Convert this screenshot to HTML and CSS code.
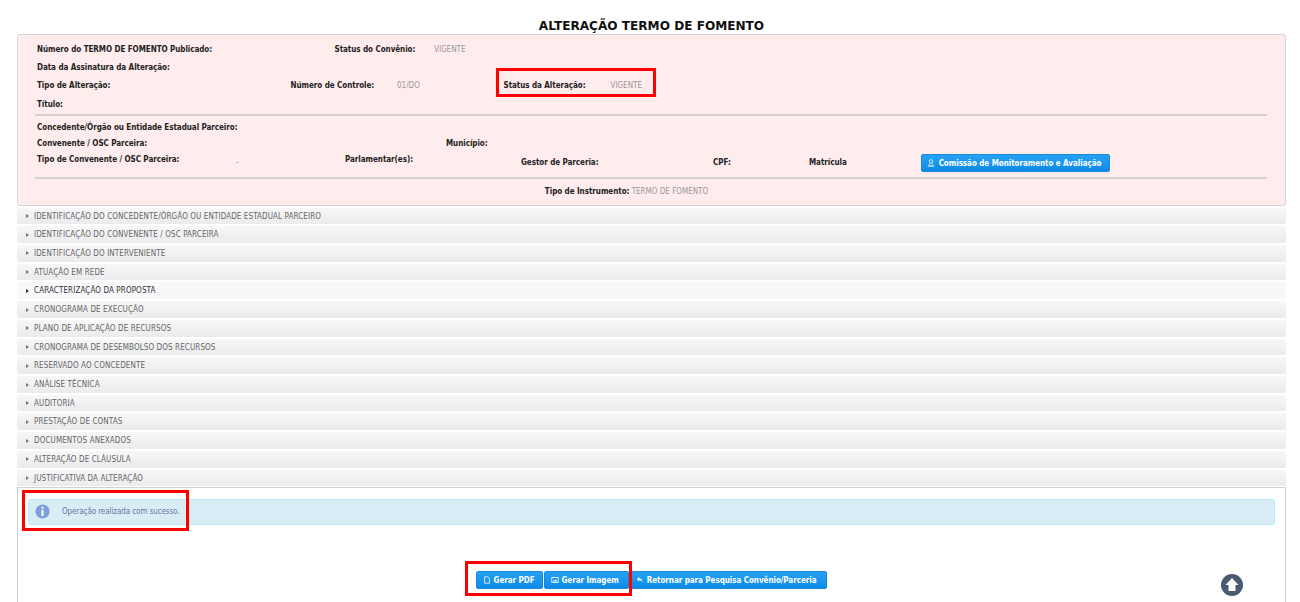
FILE: index.html
```html
<!DOCTYPE html>
<html lang="pt-BR">
<head>
    <meta charset="utf-8"/>
    <title>Alteração Termo de Fomento</title>
    <link rel="stylesheet" href="styles.css">
</head>
<body>
<h1 class="page-title">ALTERAÇÃO TERMO DE FOMENTO</h1>

<div class="summary">
    <div class="row">
        <span class="w-297"><b>Número do TERMO DE FOMENTO Publicado:</b></span>
        <span class="w-100"><b>Status do Convênio:</b></span>
        <span class="val">VIGENTE</span>
    </div>
    <div class="row">
        <span><b>Data da Assinatura da Alteração:</b></span>
    </div>
    <div class="row">
        <span class="w-253"><b>Tipo de Alteração:</b></span>
        <span class="w-106"><b>Número de Controle:</b></span>
        <span class="w-106 val">01/DO</span>
        <span class="w-107"><b>Status da Alteração:</b></span>
        <span class="val">VIGENTE</span>
    </div>
    <div class="row">
        <span><b>Título:</b></span>
    </div>
    <hr class="sep">
    <div class="row row-short">
        <span><b>Concedente/Órgão ou Entidade Estadual Parceiro:</b></span>
    </div>
    <div class="row row-short">
        <span class="w-409"><b>Convenente / OSC Parceira:</b></span>
        <span><b>Município:</b></span>
    </div>
    <div class="row row-tall">
        <span class="w-199 up"><b>Tipo de Convenente / OSC Parceira:</b></span>
        <span class="w-109 val">-</span>
        <span class="w-176 up"><b>Parlamentar(es):</b></span>
        <span class="w-192"><b>Gestor de Parceria:</b></span>
        <span class="w-96"><b>CPF:</b></span>
        <span class="w-112"><b>Matrícula</b></span>
        <button class="btn btn-wide" type="button">
            <svg class="ico" viewBox="0 0 10 10"><circle cx="5" cy="3" r="2.200" fill="none" stroke="#fff"/><path d="M3.500 5.500L2 8h6L6.500 5.500M1 9.500h8" stroke="#fff" fill="none" stroke-width=".8"/></svg>
            Comissão de Monitoramento e Avaliação
        </button>
    </div>
    <hr class="sep sep-2">
    <div class="instrumento"><b>Tipo de Instrumento:</b> <span class="val">TERMO DE FOMENTO</span></div>
</div>

<div class="accordion">
    <div class="acc-head"><i class="arrow"></i>IDENTIFICAÇÃO DO CONCEDENTE/ÓRGÃO OU ENTIDADE ESTADUAL PARCEIRO</div>
    <div class="acc-head"><i class="arrow"></i>IDENTIFICAÇÃO DO CONVENENTE / OSC PARCEIRA</div>
    <div class="acc-head"><i class="arrow"></i>IDENTIFICAÇÃO DO INTERVENIENTE</div>
    <div class="acc-head"><i class="arrow"></i>ATUAÇÃO EM REDE</div>
    <div class="acc-head hover"><i class="arrow"></i>CARACTERIZAÇÃO DA PROPOSTA</div>
    <div class="acc-head"><i class="arrow"></i>CRONOGRAMA DE EXECUÇÃO</div>
    <div class="acc-head"><i class="arrow"></i>PLANO DE APLICAÇÃO DE RECURSOS</div>
    <div class="acc-head"><i class="arrow"></i>CRONOGRAMA DE DESEMBOLSO DOS RECURSOS</div>
    <div class="acc-head"><i class="arrow"></i>RESERVADO AO CONCEDENTE</div>
    <div class="acc-head"><i class="arrow"></i>ANÁLISE TÉCNICA</div>
    <div class="acc-head"><i class="arrow"></i>AUDITORIA</div>
    <div class="acc-head"><i class="arrow"></i>PRESTAÇÃO DE CONTAS</div>
    <div class="acc-head"><i class="arrow"></i>DOCUMENTOS ANEXADOS</div>
    <div class="acc-head"><i class="arrow"></i>ALTERAÇÃO DE CLÁUSULA</div>
    <div class="acc-head"><i class="arrow"></i>JUSTIFICATIVA DA ALTERAÇÃO</div>
</div>

<div class="content">
    <div class="msg-info">
        <svg class="msg-ico" viewBox="0 0 16 16"><circle cx="8" cy="8" r="7.500" fill="#7f9fdc"/><circle cx="8" cy="4.200" r="1.200" fill="#fff"/><rect x="6.900" y="6.400" width="2.200" height="6.400" fill="#fff"/></svg>
        Operação realizada com sucesso.
    </div>
    <div class="actions">
        <button class="btn" type="button">
            <svg class="ico" viewBox="0 0 10 10"><path d="M2 1h4l2 2v6H2z" fill="none" stroke="#fff"/></svg>
            Gerar PDF
        </button>
        <button class="btn btn-img" type="button">
            <svg class="ico" viewBox="0 0 10 10"><rect x="1" y="2" width="8" height="6" fill="none" stroke="#fff"/><path d="M2 7l2-2 1 1 1-2 2 3z" fill="#fff"/></svg>
            Gerar Imagem
        </button>
        <button class="btn btn-back" type="button">
            <svg class="ico" viewBox="0 0 10 10"><path d="M1 4l3-3v2c3 0 4 2 4 5-1-2-2-3-4-3v2z" fill="#fff"/></svg>
            Retornar para Pesquisa Convênio/Parceria
        </button>
    </div>
</div>

<svg class="to-top" viewBox="0 0 22 22"><circle cx="11" cy="11" r="11" fill="#4b5a70"/><path d="M11 4l6.500 7H14.500v6h-7v-6H4.500z" fill="#fff"/></svg>

<div class="mark mark-status"></div>
<div class="mark mark-msg"></div>
<div class="mark mark-btns"></div>
</body>
</html>
```

FILE: styles.css
```css
html, body {
    margin: 0;
    height: 602px;
    overflow: hidden;
}
body {
    position: relative;
    background: #fff;
    font-family: "DejaVu Sans Condensed", "DejaVu Sans", sans-serif;
    font-size: 8px;
    color: #333;
}
b {
    font-weight: bold;
    color: #222;
    letter-spacing: -0.05px;
}
.page-title {
    margin: 0;
    padding: 19px 0 0 3px;
    height: 15px;
    font-size: 12.1px;
    line-height: 15px;
    font-weight: bold;
    font-family: "DejaVu Sans", sans-serif;
    text-align: center;
    color: #111;
}
.summary {
    margin: 0 14px 0 17px;
    height: 172px;
    padding-top: 5px;
    box-sizing: border-box;
    background: #ffecec;
    border: 1px solid #d5d5d5;
    border-radius: 3px;
}
.row {
    display: flex;
    align-items: center;
    height: 18.3px;
    padding-left: 19px;
    white-space: nowrap;
}
.val {
    color: #999;
}
.w-297 { width: 297.5px; }
.w-100 { width: 99.5px; }
.w-253 { width: 253.5px; }
.w-106 { width: 106.5px; }
.w-107 { width: 107px; }
.w-409 { width: 409px; }
.w-199 { width: 199px; }
.w-109 { width: 109px; }
.w-176 { width: 176px; }
.w-192 { width: 192px; }
.w-96 { width: 96px; }
.w-112 { width: 112px; }
.sep {
    height: 2px;
    margin: 1px 18px 3px 17px;
    border: 0;
    background: #d6d0d0;
}
.row-short {
    height: 16px;
}
.row-tall {
    align-items: flex-start;
    height: 21px;
    padding-top: 3px;
    line-height: 12px;
}
.row-tall > span {
    padding-top: 3px;
}
.row-tall > .up {
    padding-top: 0;
}
.sep-2 {
    margin-top: 2px;
    margin-bottom: 0;
}
.instrumento {
    margin-top: 8px;
    padding-right: 50px;
    text-align: center;
    color: #222;
}
.btn {
    display: inline-flex;
    align-items: center;
    gap: 3px;
    height: 18px;
    padding: 1px 7px 0 6px;
    border: 1px solid #1e88d8;
    border-radius: 2px;
    background: linear-gradient(#26a2f5, #0d8ae6);
    color: #fff;
    font-family: "DejaVu Sans Condensed", sans-serif;
    font-size: 8px;
    font-weight: bold;
    letter-spacing: -0.05px;
    white-space: nowrap;
}
.btn-wide {
    gap: 4px;
    width: 189px;
    justify-content: center;
    padding: 0 3px 0 0;
}
.btn-img {
    padding-right: 9px;
}
.btn-back {
    margin-left: 1px;
    padding-left: 4px;
    padding-right: 10px;
}
.ico {
    width: 8px;
    height: 8px;
    flex: none;
}
.accordion {
    margin: 1.5px 14px 0 17px;
}
.acc-head {
    display: flex;
    align-items: center;
    height: 16.73px;
    margin-bottom: 2px;
    padding: 0.4px 0 0 9px;
    box-sizing: border-box;
    background: linear-gradient(#f7f7f8, #ebebed);
    border-radius: 2px;
    color: #666;
    letter-spacing: 0.1px;
    white-space: nowrap;
}
.acc-head.hover {
    background: #f8f8fa;
    color: #333;
}
.arrow {
    width: 0;
    height: 0;
    margin-right: 5px;
    border-left: 3px solid #777;
    border-top: 2.5px solid transparent;
    border-bottom: 2.5px solid transparent;
}
.hover .arrow {
    border-left-color: #333;
}
.content {
    margin: -1.5px 14px 0 17px;
    height: 116px;
    padding: 11px 10px 0;
    background: #fff;
    border: 1px solid #d0d0d0;
    border-bottom: 0;
    box-sizing: border-box;
}
.msg-info {
    display: flex;
    align-items: center;
    gap: 12px;
    height: 26px;
    padding-left: 6px;
    box-sizing: border-box;
    background: #d9edf7;
    border: 1px solid #bce8f1;
    border-radius: 3px;
    color: #5b7ba0;
    letter-spacing: -0.1px;
}
.msg-ico {
    width: 15px;
    height: 15px;
}
.actions {
    display: flex;
    justify-content: center;
    gap: 1px;
    margin-top: 46px;
}
.to-top {
    position: absolute;
    left: 1221px;
    top: 574px;
    width: 22px;
    height: 22px;
}
.mark {
    position: absolute;
    border: 3px solid #f00;
    box-sizing: border-box;
}
.mark-status {
    left: 496px;
    top: 68px;
    width: 160px;
    height: 29px;
}
.mark-msg {
    left: 22px;
    top: 490px;
    width: 167px;
    height: 41px;
}
.mark-btns {
    left: 465px;
    top: 561px;
    width: 167px;
    height: 35px;
}
```
